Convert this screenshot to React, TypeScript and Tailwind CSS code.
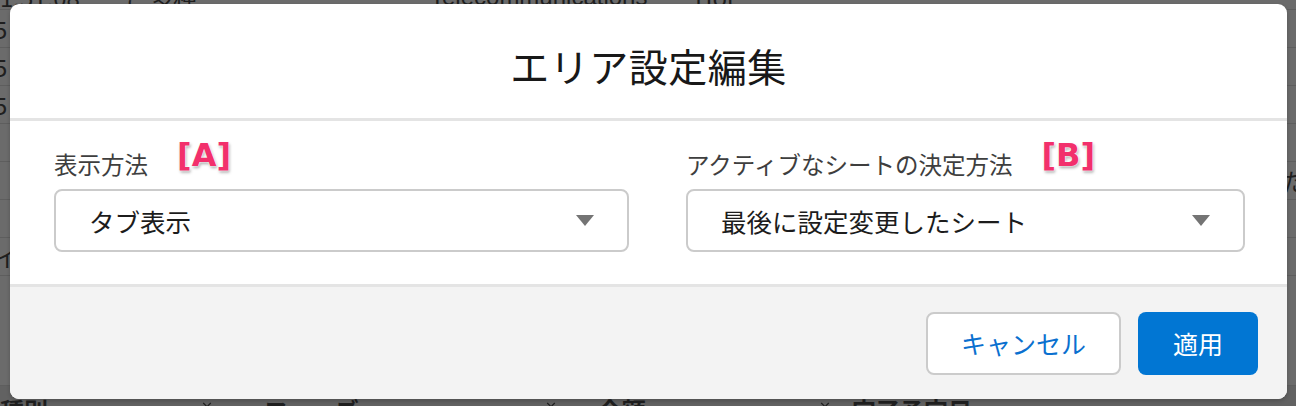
import { ChevronDown } from "lucide-react";

const font = "font-['Hiragino_Sans','Noto_Sans_CJK_JP',sans-serif]";

function Caret() {
  return (
    <svg width="18" height="11" viewBox="0 0 18 11" className="shrink-0">
      <path d="M0 0 H18 L9 11 Z" fill="#747474" />
    </svg>
  );
}

function Tag({ label }: { label: string }) {
  return (
    <span className="ml-[29px] -mt-[12px] text-[32px] leading-none font-bold text-[#f2306c] font-['DejaVu_Sans',sans-serif] [text-shadow:0_0_2px_#fff,0_0_2px_#fff,1px_2px_3px_rgba(0,0,0,0.35)]">
      [{label}]
    </span>
  );
}

function Field({ label, tag, value, width }: { label: string; tag: string; value: string; width: string }) {
  return (
    <div className={`flex flex-col ${width}`}>
      <div className="flex items-center h-[36px]">
        <span className="text-[23.5px] text-[#3e3e3e] leading-none mt-[7px]">{label}</span>
        <Tag label={tag} />
      </div>
      <div className="mt-[10px] h-[63px] rounded-[8px] border-2 border-[#cbcbcb] bg-white flex items-center justify-between pl-[33px] pr-[33px]">
        <span className="text-[25.5px] text-[#1c1c1c] leading-none">{value}</span>
        <Caret />
      </div>
    </div>
  );
}

function BackgroundTable() {
  const rows = ["5", "5", "5", "", "", "", "イ"];
  return (
    <div className="flex flex-col -mt-[14px] text-[#1f1f1f]">
      <div className="h-[24px] flex items-end border-b border-[#5e5e5e] text-[24px] leading-none">
        <span className="w-[125px]">1:51:08</span>
        <span className="w-[305px]">ご多種</span>
        <span className="w-[265px] font-['Liberation_Sans',sans-serif]">Telecommunications</span>
        <span>Hot</span>
      </div>
      {rows.map((t, i) => (
        <div key={i} className="h-[38px] flex items-center border-b border-[#5e5e5e] text-[24px] justify-between">
          <span className="-ml-[6px]">{t}</span>
          <span className="-mr-[10px]">{i === 4 ? "た" : ""}</span>
        </div>
      ))}
      <div className="h-[110px] border-b border-[#5e5e5e]" />
      <div className="h-[40px] flex items-start pt-[6px] text-[24px] font-bold bg-[#626262]">
        <span className="w-[200px]">種別</span>
        <ChevronDown size={14} className="mr-[50px] mt-[6px]" />
        <span className="w-[280px]">フェーズ</span>
        <ChevronDown size={14} className="mr-[40px] mt-[6px]" />
        <span className="w-[220px]">金額</span>
        <ChevronDown size={14} className="mr-[20px] mt-[6px]" />
        <span>完了予定日</span>
      </div>
    </div>
  );
}

export default function App() {
  return (
    <div className={`relative w-[1296px] h-[406px] overflow-hidden bg-[#6b6b6b] ${font}`}>
      <BackgroundTable />

      {/* Modal */}
      <div className="absolute left-[10px] top-[4px] w-[1277px] h-[395px] rounded-[9px] bg-white overflow-hidden flex flex-col shadow-[0_2px_4px_rgba(0,0,0,0.2)]">
        <header className="h-[117px] flex items-center justify-center pt-[8px] border-b-[3px] border-[#e4e4e4]">
          <h1 className="text-[39px] text-[#181818] leading-none tracking-[0.5px]">エリア設定編集</h1>
        </header>

        <main className="flex pl-[44px] pt-[22px] h-[166px] border-b-[3px] border-[#e4e4e4]">
          <Field label="表示方法" tag="A" value="タブ表示" width="w-[575px]" />
          <div className="w-[57px]" />
          <Field label="アクティブなシートの決定方法" tag="B" value="最後に設定変更したシート" width="w-[559px]" />
        </main>

        <footer className="flex-1 bg-[#f3f3f3] flex items-start justify-end pt-[25px] pr-[29px] gap-[17px]">
          <button className="w-[195px] h-[63px] rounded-[8px] border-2 border-[#cbcbcb] bg-white text-[25px] text-[#0a70cf] leading-none">
            キャンセル
          </button>
          <button className="w-[120px] h-[63px] rounded-[8px] bg-[#0176d3] text-[25px] text-white leading-none">
            適用
          </button>
        </footer>
      </div>
    </div>
  );
}
